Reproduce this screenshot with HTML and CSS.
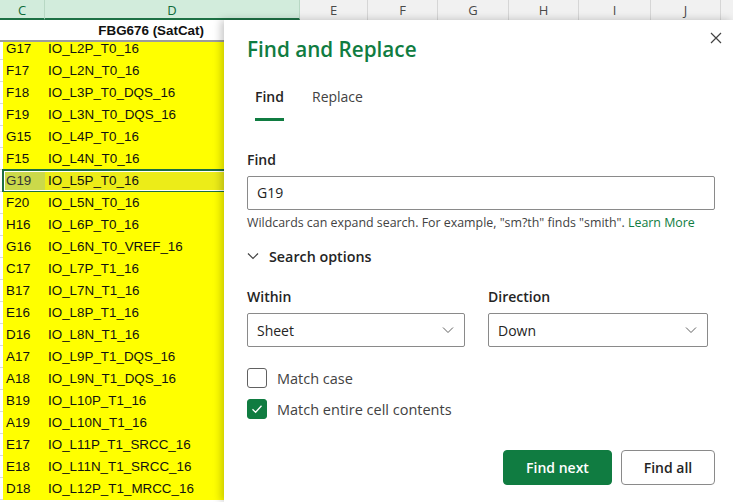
FILE: index.html
```html
<!DOCTYPE html>
<html>
<head>
<meta charset="utf-8">
<link rel="stylesheet" href="styles.css">
</head>
<body>
<div class="app">
  <div class="colheads">
    <div class="ch sel c">C</div>
    <div class="ch sel d">D</div>
    <div class="ch">E</div>
    <div class="ch">F</div>
    <div class="ch">G</div>
    <div class="ch">H</div>
    <div class="ch">I</div>
    <div class="ch">J</div>
    <div class="ch rest"></div>
  </div>
  <div class="main">
    <div class="sheet">
      <div class="titlerow"><span>FBG676 (SatCat)</span></div>
      <div class="rows-viewport">
        <div class="rows">
          <div class="row top"><span class="strip"></span><span class="cc">G17</span><span class="cd">IO_L2P_T0_16</span></div>
          <div class="row"><span class="strip"></span><span class="cc">F17</span><span class="cd">IO_L2N_T0_16</span></div>
          <div class="row"><span class="strip"></span><span class="cc">F18</span><span class="cd">IO_L3P_T0_DQS_16</span></div>
          <div class="row"><span class="strip"></span><span class="cc">F19</span><span class="cd">IO_L3N_T0_DQS_16</span></div>
          <div class="row"><span class="strip"></span><span class="cc">G15</span><span class="cd">IO_L4P_T0_16</span></div>
          <div class="row"><span class="strip"></span><span class="cc">F15</span><span class="cd">IO_L4N_T0_16</span></div>
          <div class="row active"><span class="strip"></span><span class="cc">G19</span><span class="cd">IO_L5P_T0_16</span></div>
          <div class="row"><span class="strip"></span><span class="cc">F20</span><span class="cd">IO_L5N_T0_16</span></div>
          <div class="row"><span class="strip"></span><span class="cc">H16</span><span class="cd">IO_L6P_T0_16</span></div>
          <div class="row"><span class="strip"></span><span class="cc">G16</span><span class="cd">IO_L6N_T0_VREF_16</span></div>
          <div class="row"><span class="strip"></span><span class="cc">C17</span><span class="cd">IO_L7P_T1_16</span></div>
          <div class="row"><span class="strip"></span><span class="cc">B17</span><span class="cd">IO_L7N_T1_16</span></div>
          <div class="row"><span class="strip"></span><span class="cc">E16</span><span class="cd">IO_L8P_T1_16</span></div>
          <div class="row"><span class="strip"></span><span class="cc">D16</span><span class="cd">IO_L8N_T1_16</span></div>
          <div class="row"><span class="strip"></span><span class="cc">A17</span><span class="cd">IO_L9P_T1_DQS_16</span></div>
          <div class="row"><span class="strip"></span><span class="cc">A18</span><span class="cd">IO_L9N_T1_DQS_16</span></div>
          <div class="row"><span class="strip"></span><span class="cc">B19</span><span class="cd">IO_L10P_T1_16</span></div>
          <div class="row"><span class="strip"></span><span class="cc">A19</span><span class="cd">IO_L10N_T1_16</span></div>
          <div class="row"><span class="strip"></span><span class="cc">E17</span><span class="cd">IO_L11P_T1_SRCC_16</span></div>
          <div class="row"><span class="strip"></span><span class="cc">E18</span><span class="cd">IO_L11N_T1_SRCC_16</span></div>
          <div class="row"><span class="strip"></span><span class="cc">D18</span><span class="cd">IO_L12P_T1_MRCC_16</span></div>
        </div>
      </div>
    </div>
    <div class="dialog">
      <div class="dlg-head">
        <h1 class="dlg-title">Find and Replace</h1>
        <button class="close" aria-label="Close">
          <svg width="12" height="12" viewBox="0 0 12 12"><path d="M1 1L11 11M11 1L1 11" stroke="#424242" stroke-width="1.2" fill="none"/></svg>
        </button>
      </div>
      <div class="tabs">
        <div class="tab on">Find</div>
        <div class="tab">Replace</div>
      </div>
      <div class="lbl find-lbl">Find</div>
      <div class="input">G19</div>
      <div class="hint">Wildcards can expand search. For example, "sm?th" finds "smith". <span class="link">Learn More</span></div>
      <div class="opts">
        <svg class="chev" width="12" height="8" viewBox="0 0 12 8"><path d="M1 1.5L6 6.5L11 1.5" stroke="#424242" stroke-width="1.2" fill="none"/></svg>
        <span>Search options</span>
      </div>
      <div class="selects">
        <div class="field">
          <div class="lbl">Within</div>
          <div class="select"><span>Sheet</span><svg width="12" height="8" viewBox="0 0 12 8"><path d="M1 1.5L6 6.5L11 1.5" stroke="#616161" stroke-width="1" fill="none"/></svg></div>
        </div>
        <div class="field">
          <div class="lbl">Direction</div>
          <div class="select"><span>Down</span><svg width="12" height="8" viewBox="0 0 12 8"><path d="M1 1.5L6 6.5L11 1.5" stroke="#616161" stroke-width="1" fill="none"/></svg></div>
        </div>
      </div>
      <div class="check first"><span class="box"></span><span>Match case</span></div>
      <div class="check"><span class="box on"><svg width="14" height="14" viewBox="0 0 14 14"><path d="M2.5 7.2L5.6 10.2L11.5 3.8" stroke="#fff" stroke-width="1.3" fill="none"/></svg></span><span>Match entire cell contents</span></div>
      <div class="buttons">
        <button class="btn primary">Find next</button>
        <button class="btn">Find all</button>
      </div>
    </div>
  </div>
</div>
</body>
</html>
```
FILE: styles.css
```css
* { box-sizing: border-box; }
html, body { margin: 0; padding: 0; }
body { width: 733px; height: 502px; overflow: hidden; background: #fff; }
.app { width: 733px; height: 502px; display: flex; flex-direction: column; }

.colheads { height: 20px; display: flex; background: #f1f1f1; flex: none; }
.ch {
  width: 70px; height: 20px; border-right: 1px solid #d6d6d6;
  font-family: "Open Sans", sans-serif; font-size: 13px; color: #4a4a4a;
  display: flex; align-items: center; justify-content: center; line-height: 18px;
}
.ch:nth-child(3) { width: 68px; }
.ch:nth-child(4) { width: 70px; }
.ch:nth-child(5) { width: 71px; }
.ch:nth-child(6) { width: 70px; }
.ch:nth-child(7) { width: 72px; }
.ch:nth-child(8) { width: 70px; }
.ch.rest { flex: 1; border-right: none; }
.ch.sel { background: #d2ecdc; color: #0e6b39; border-bottom: 2px solid #1e7145; border-right-color: #b8d8c4; padding-top: 2px; }
.ch.c { width: 45px; }
.ch.d { width: 255px; }

.main { flex: 1; display: flex; min-height: 0; }
.sheet { width: 224px; flex: none; display: flex; flex-direction: column; overflow: hidden;
  font-family: "Liberation Sans", Arial, sans-serif; font-size: 13.4px; color: #111; }
.titlerow { height: 22px; border-bottom: 2px solid #9d9d9d; display: flex; align-items: center; justify-content: flex-end; padding-right: 20px; font-weight: bold; white-space: nowrap; }
.rows-viewport { flex: 1; overflow: hidden; }
.row { height: 22px; display: flex; align-items: center; background: #ffff00; position: relative; white-space: nowrap; }
.strip { width: 3px; height: 100%; background: #fff; border-bottom: 1px solid #d9d9d9; flex: none; }
.cc { width: 42px; padding-left: 3px; height: 22px; line-height: 22px; flex: none; }
.cd { flex: 1; padding-left: 3px; height: 22px; line-height: 22px; }
.row.top { height: 18px; align-items: flex-start; }
.row.top .cc, .row.top .cd { height: 14px; line-height: 14px; }
.row.active .cc { background: #cbd94a; color: #333; }
.row.active .cd { background: #ecec18; }
.row.active::after {
  content: ""; position: absolute; left: 2px; right: -4px; top: -1px; bottom: -1px;
  border: 2px solid #1e6e43; box-shadow: inset 0 0 0 1px #fff;
}

.dialog {
  flex: 1; background: #fff; box-shadow: -3px 0 8px rgba(0,0,0,0.22);
  padding: 0 18px 0 23px; font-family: "Open Sans", sans-serif; color: #242424;
  position: relative; z-index: 2;
}
.dlg-head { display: flex; justify-content: space-between; align-items: flex-start; margin-top: 14px; }
.dlg-title { margin: 0; font-size: 20.7px; font-weight: 600; line-height: 30px; color: #107c41; }
.close { border: none; background: none; padding: 0; margin: -3px -8px 0 0; width: 14px; height: 14px; display: flex; align-items: center; justify-content: center; }

.tabs { display: flex; gap: 28px; margin-top: 23px; padding-left: 8px; }
.tab { font-size: 14px; line-height: 20px; padding-bottom: 11px; border-bottom: 3px solid transparent; color: #424242; }
.tab.on { border-bottom-color: #107c41; color: #242424; font-weight: 600; }

.lbl { font-size: 14px; line-height: 20px; font-weight: 600; color: #242424; }
.find-lbl { margin-top: 29px; }
.input { margin-top: 6px; height: 34px; border: 1px solid #8a8a8a; border-radius: 2px; padding-left: 9px; font-size: 14px; line-height: 32px; color: #242424; }
.hint { margin-top: 5px; font-size: 12.4px; line-height: 16px; color: #424242; white-space: nowrap; }
.link { color: #107c41; }

.opts { margin-top: 15px; display: flex; align-items: center; height: 20px; font-size: 14.3px; font-weight: 600; color: #242424; }
.chev { margin-right: 10px; }

.selects { margin-top: 21px; display: grid; grid-template-columns: 218px 220px; column-gap: 23px; }
.select { margin-top: 6px; height: 34px; border: 1px solid #8a8a8a; border-radius: 2px; display: flex; align-items: center; justify-content: space-between; padding: 0 10px 0 9px; font-size: 14px; color: #242424; }

.check { display: flex; align-items: center; height: 20px; font-size: 14.5px; color: #424242; gap: 10px; margin-top: 11px; }
.check.first { margin-top: 21px; }
.box { width: 20px; height: 20px; border: 1px solid #616161; border-radius: 3px; display: flex; align-items: center; justify-content: center; flex: none; }
.box.on { background: #107c41; border-color: #107c41; }

.buttons { display: flex; justify-content: flex-end; gap: 9px; margin-top: 31px; }
.btn { height: 35px; border-radius: 4px; font-family: "Open Sans", sans-serif; font-size: 14px; font-weight: 600; border: 1px solid #8a8a8a; background: #fff; color: #242424; padding: 0; }
.btn.primary { width: 109px; background: #107c41; border-color: #107c41; color: #fff; }
.btn:not(.primary) { width: 94px; }
```
